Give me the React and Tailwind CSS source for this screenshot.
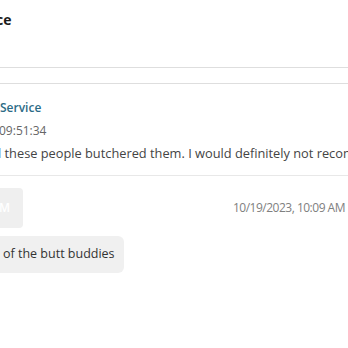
import React from 'react'

export default function App() {
  return (
    <div className="w-[348px] h-[348px] overflow-hidden bg-white font-['Open_Sans',sans-serif]">
      {/* header */}
      <div className="h-[67px] pt-[9px]">
        <div className="-ml-[4px] text-[14px] leading-[22px] font-bold text-[#1a1a1a]">ce</div>
      </div>
      <div className="h-[17px] border-y border-[#dedede]" />

      {/* message */}
      <div className="pt-[12px] pb-[10px] border-b border-[#e8e8e8]">
        <div className="text-[12px] leading-[23px] font-semibold text-[#2c6b86]">Service</div>
        <div className="-ml-[1px] text-[12px] leading-[23px] text-[#666]">09:51:34</div>
        <div className="-ml-[2px] text-[12.8px] leading-[23px] text-[#444] whitespace-nowrap">
          l these people butchered them. I would definitely not recom
        </div>
      </div>

      {/* reply row */}
      <div className="flex items-center justify-between pt-[12px] pr-[3px]">
        <div className="h-[40px] w-[23px] rounded-r-[4px] bg-[#efefef] flex items-center">
          <span className="-ml-[1px] text-[12px] font-semibold text-white">M</span>
        </div>
        <div className="text-[12px] tracking-[-0.5px] text-[#808080]">10/19/2023, 10:09 AM</div>
      </div>

      <div className="mt-[8px] inline-flex items-center h-[37px] pl-[3px] pr-[9px] rounded-r-[6px] bg-[#f0f0f0]">
        <span className="text-[12.5px] text-[#333]">of the butt buddies</span>
      </div>
    </div>
  )
}
